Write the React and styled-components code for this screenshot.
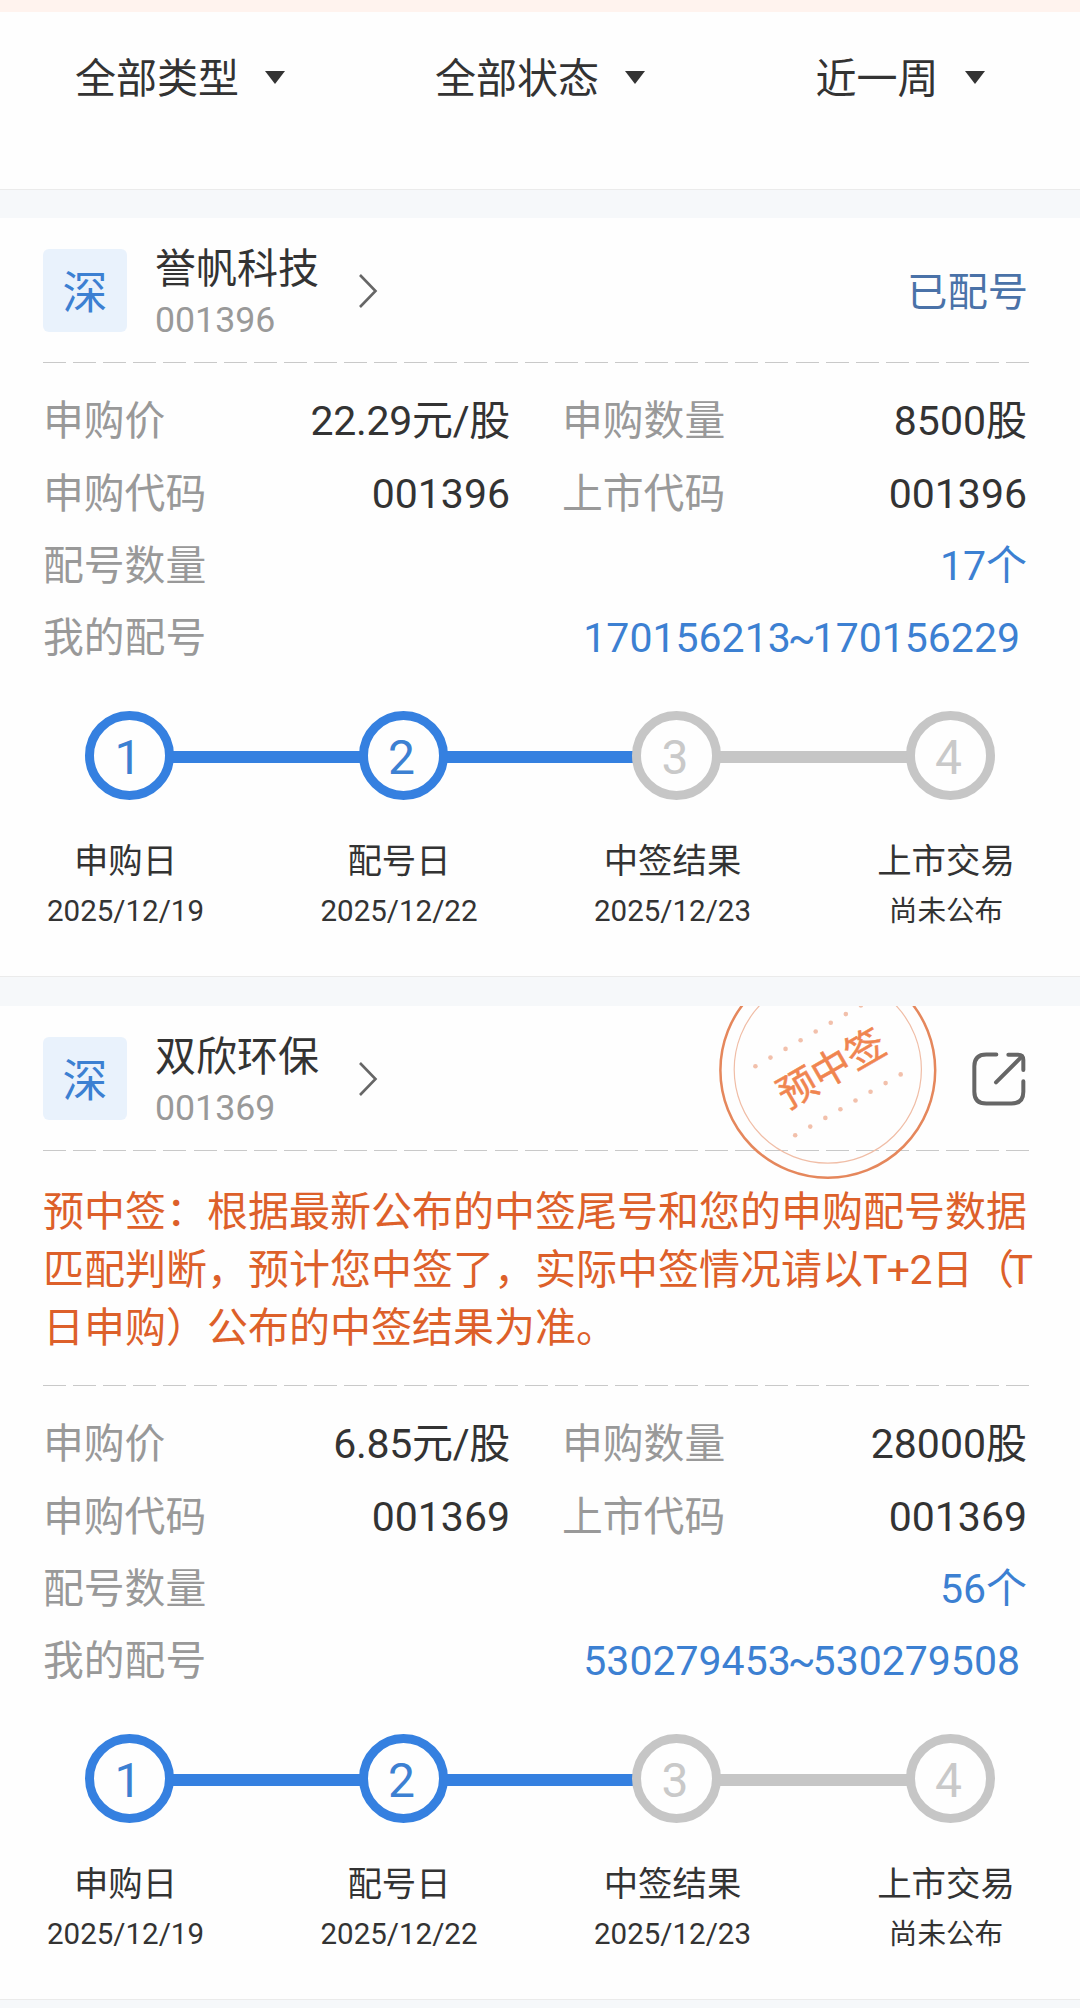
import React from "react";
import styled, { createGlobalStyle } from "styled-components";

const GlobalStyle = createGlobalStyle`
  * { box-sizing: border-box; }
  body {
    margin: 0;
    background: #f6f8fa;
    font-family: Roboto, "Noto Sans CJK SC", sans-serif;
    text-autospace: no-autospace;
    color: #333;
  }
`;

const Page = styled.main`
  width: 1080px;
  height: 2008px;
  overflow: hidden;
  display: flex;
  flex-direction: column;
`;

const NoticeStrip = styled.div`
  height: 12px;
  flex: none;
  background: #fff3ee;
`;

const FilterBar = styled.nav`
  display: grid;
  grid-template-columns: repeat(3, 1fr);
  align-items: start;
  height: 178px;
  flex: none;
  padding-top: 37px;
  background: #fefefe;
  border-bottom: 1px solid #ebebeb;
`;

const Filter = styled.div`
  display: flex;
  align-items: center;
  justify-content: center;
  gap: 26px;
  height: 60px;
  font-size: 41px;
  line-height: 60px;
`;

const Caret = styled.i`
  border: 10.5px solid transparent;
  border-top: 13px solid #333;
  border-bottom: 0;
  margin-top: -4px;
`;

const Card = styled.section`
  position: relative;
  flex: none;
  height: ${(p) => p.$height}px;
  margin-top: ${(p) => p.$gap}px;
  padding: 0 51px 0 43px;
  overflow: hidden;
  background: #fefefe;
  border-bottom: 1px solid #ebebeb;
`;

const CardHeader = styled.header`
  display: flex;
  align-items: center;
  height: 144px;
  padding-top: 1px;
`;

const Market = styled.span`
  width: 84px;
  height: 83px;
  border-radius: 6px;
  background: #e9f2fc;
  color: #3c80d2;
  font-size: 45px;
  line-height: 89px;
  text-align: center;
`;

const Stock = styled.div`
  margin: 4px 0 0 28px;
  display: flex;
  flex-direction: column;
`;

const StockName = styled.strong`
  font-size: 41px;
  font-weight: 400;
  line-height: 54px;
`;

const StockCode = styled.span`
  font-size: 35.7px;
  line-height: 48px;
  color: #999;
`;

const Chevron = styled.svg`
  width: 20px;
  height: 34px;
  margin: 0 0 0 39px;
`;

const Status = styled.span`
  margin: 4px 1px 0 auto;
  font-size: 40.3px;
  line-height: 60px;
  color: #4a72a8;
`;

const ShareIcon = styled.svg`
  width: 54px;
  height: 54px;
  margin: 0 3px 0 auto;
`;

const Dashes = styled.div`
  height: 1px;
  background: repeating-linear-gradient(to right, #c9c9c9 0 23px, transparent 23px 30.1px);
`;

const Notice = styled.p`
  height: 234px;
  margin: 0 -10px 0 0;
  padding-top: 32px;
  font-size: 41px;
  line-height: 58px;
  white-space: nowrap;
  color: #dd602a;
`;

const NoticeLine = styled.span`
  display: block;
`;

const Tight = styled.span`
  letter-spacing: ${(p) => p.$by}px;
`;

const Details = styled.dl`
  display: grid;
  grid-template-columns: 467px 465px;
  grid-auto-rows: 72.4px;
  column-gap: 52px;
  margin: 0;
  padding-top: 22px;
`;

const Detail = styled.div`
  display: flex;
  justify-content: space-between;
  align-items: center;
  line-height: 72px;
  grid-column: ${(p) => (p.$wide ? "1 / -1" : "auto")};
`;

const Label = styled.dt`
  font-size: 40.8px;
  color: #999;
`;

const Value = styled.dd`
  margin: 0;
  font-size: 41px;
  color: ${(p) => (p.$accent ? "#3c80d2" : "#333")};
  padding-right: ${(p) => p.$inset || 0}px;
`;

const Tilde = styled.span`
  margin: 0 -3px;
`;

const Rail = styled.div`
  display: flex;
  align-items: center;
  margin-top: 36.4px;
  padding: 0 34.5px 0 42px;
`;

const tone = (active) => (active ? "#3580e0" : "#c6c6c6");

const Dot = styled.span`
  flex: none;
  z-index: 1;
  width: 89px;
  height: 89px;
  border: 9px solid ${(p) => tone(p.$active)};
  border-radius: 50%;
  background: #fefefe;
  color: ${(p) => (p.$active ? "#3c80d2" : "#c9c9c9")};
  font-size: 48px;
  line-height: 76px;
  text-align: center;
  padding-right: 3px;
`;

const Link = styled.span`
  flex: 1;
  height: 12px;
  margin: 3px -3px 0;
  background: ${(p) => tone(p.$active)};
`;

const Captions = styled.div`
  display: flex;
  justify-content: space-between;
  margin-top: 36px;
  padding: 0 3px 0 2.5px;
`;

const Caption = styled.div`
  width: 160px;
  display: flex;
  flex-direction: column;
  align-items: center;
`;

const StepName = styled.span`
  font-size: 34.4px;
  line-height: 50px;
`;

const StepDate = styled.span`
  font-size: ${(p) => (p.$pending ? 28.6 : 29.5)}px;
  line-height: 50px;
  white-space: nowrap;
`;

const Stamp = styled.svg`
  position: absolute;
  top: 0;
  left: 715px;
  width: 226px;
  height: 178px;
`;

const filters = ["全部类型", "全部状态", "近一周"];

const stocks = [
  {
    name: "誉帆科技",
    code: "001396",
    price: "22.29元/股",
    amount: "8500股",
    count: "17个",
    numbers: ["170156213", "170156229"],
    height: 759,
    gap: 28,
  },
  {
    name: "双欣环保",
    code: "001369",
    price: "6.85元/股",
    amount: "28000股",
    count: "56个",
    numbers: ["530279453", "530279508"],
    won: true,
    height: 994,
    gap: 29,
  },
];

const steps = [
  { name: "申购日", date: "2025/12/19", active: true },
  { name: "配号日", date: "2025/12/22", active: true },
  { name: "中签结果", date: "2025/12/23" },
  { name: "上市交易", date: "尚未公布", pending: true },
];

const stampDots = [0, 1, 2, 3, 4, 5, 6, 7];

function WinStamp() {
  return (
    <Stamp viewBox="0 0 226 178" fill="none">
      <circle cx="112.8" cy="64.3" r="107.4" stroke="#e5875c" strokeWidth="2.5" />
      <circle cx="112.8" cy="63.6" r="93.6" stroke="#f0bda6" strokeWidth="1.2" />
      <g fill="#f2c0ab">
        {stampDots.map((i) => (
          <circle key={`u${i}`} cx={40.4 + i * 15.07} cy={60.3 - i * 8.7} r="2.3" />
        ))}
        {stampDots.map((i) => (
          <circle key={`l${i}`} cx={80.2 + i * 15.07} cy={129.3 - i * 8.7} r="2.3" />
        ))}
      </g>
      <text
        transform="translate(116 62) rotate(-30)"
        y="14.5"
        textAnchor="middle"
        fontSize="39"
        fill="#f08550"
        stroke="#f08550"
        strokeWidth="0.5"
      >
        预中签
      </text>
    </Stamp>
  );
}

function WinNotice() {
  return (
    <Notice>
      <NoticeLine>预中签：根据最新公布的中签尾号和您的申购配号数据</NoticeLine>
      <NoticeLine>
        匹配判断，预计您中签了，实际中签情况请以<Tight $by={-0.6}>T+2</Tight>日
        <Tight $by={-5.5}>（</Tight>T
      </NoticeLine>
      <NoticeLine>日申购）公布的中签结果为准。</NoticeLine>
    </Notice>
  );
}

function StockCard({ stock }) {
  return (
    <Card $height={stock.height} $gap={stock.gap}>
      <CardHeader>
        <Market>深</Market>
        <Stock>
          <StockName>{stock.name}</StockName>
          <StockCode>{stock.code}</StockCode>
        </Stock>
        <Chevron viewBox="0 0 20 34" fill="none" stroke="#666" strokeWidth="2.6">
          <path d="M2 1 L17.5 17 L2 33" />
        </Chevron>
        {stock.won ? (
          <ShareIcon
            viewBox="848 184 162 162"
            fill="none"
            stroke="#666"
            strokeWidth="12"
            strokeLinecap="round"
          >
            <path d="M921 191.500H891Q855 191.500 855 227V303Q855 338.500 891 338.500H966Q1002 338.500 1002 303V272" />
            <path d="M957 192H986Q1002 192 1002 208V238" />
            <path d="M920 275L998 197" />
          </ShareIcon>
        ) : (
          <Status>已配号</Status>
        )}
      </CardHeader>
      <Dashes />
      {stock.won && (
        <>
          <WinNotice />
          <Dashes />
          <WinStamp />
        </>
      )}
      <Details>
        <Detail>
          <Label>申购价</Label>
          <Value>
            <Tight $by={-0.3}>{stock.price}</Tight>
          </Value>
        </Detail>
        <Detail>
          <Label>申购数量</Label>
          <Value>{stock.amount}</Value>
        </Detail>
        <Detail>
          <Label>申购代码</Label>
          <Value>{stock.code}</Value>
        </Detail>
        <Detail>
          <Label>上市代码</Label>
          <Value>{stock.code}</Value>
        </Detail>
        <Detail $wide>
          <Label>配号数量</Label>
          <Value $accent>{stock.count}</Value>
        </Detail>
        <Detail $wide>
          <Label>我的配号</Label>
          <Value $accent $inset={7}>
            {stock.numbers[0]}
            <Tilde>~</Tilde>
            {stock.numbers[1]}
          </Value>
        </Detail>
      </Details>
      <Rail>
        {steps.map((step, i) => (
          <React.Fragment key={step.name}>
            {i > 0 && <Link $active={steps[i - 1].active} />}
            <Dot $active={step.active}>{i + 1}</Dot>
          </React.Fragment>
        ))}
      </Rail>
      <Captions>
        {steps.map((step) => (
          <Caption key={step.name}>
            <StepName>{step.name}</StepName>
            <StepDate $pending={step.pending}>{step.date}</StepDate>
          </Caption>
        ))}
      </Captions>
    </Card>
  );
}

export default function App() {
  return (
    <Page>
      <GlobalStyle />
      <NoticeStrip />
      <FilterBar>
        {filters.map((name) => (
          <Filter key={name}>
            {name}
            <Caret />
          </Filter>
        ))}
      </FilterBar>
      {stocks.map((stock) => (
        <StockCard key={stock.code} stock={stock} />
      ))}
    </Page>
  );
}
